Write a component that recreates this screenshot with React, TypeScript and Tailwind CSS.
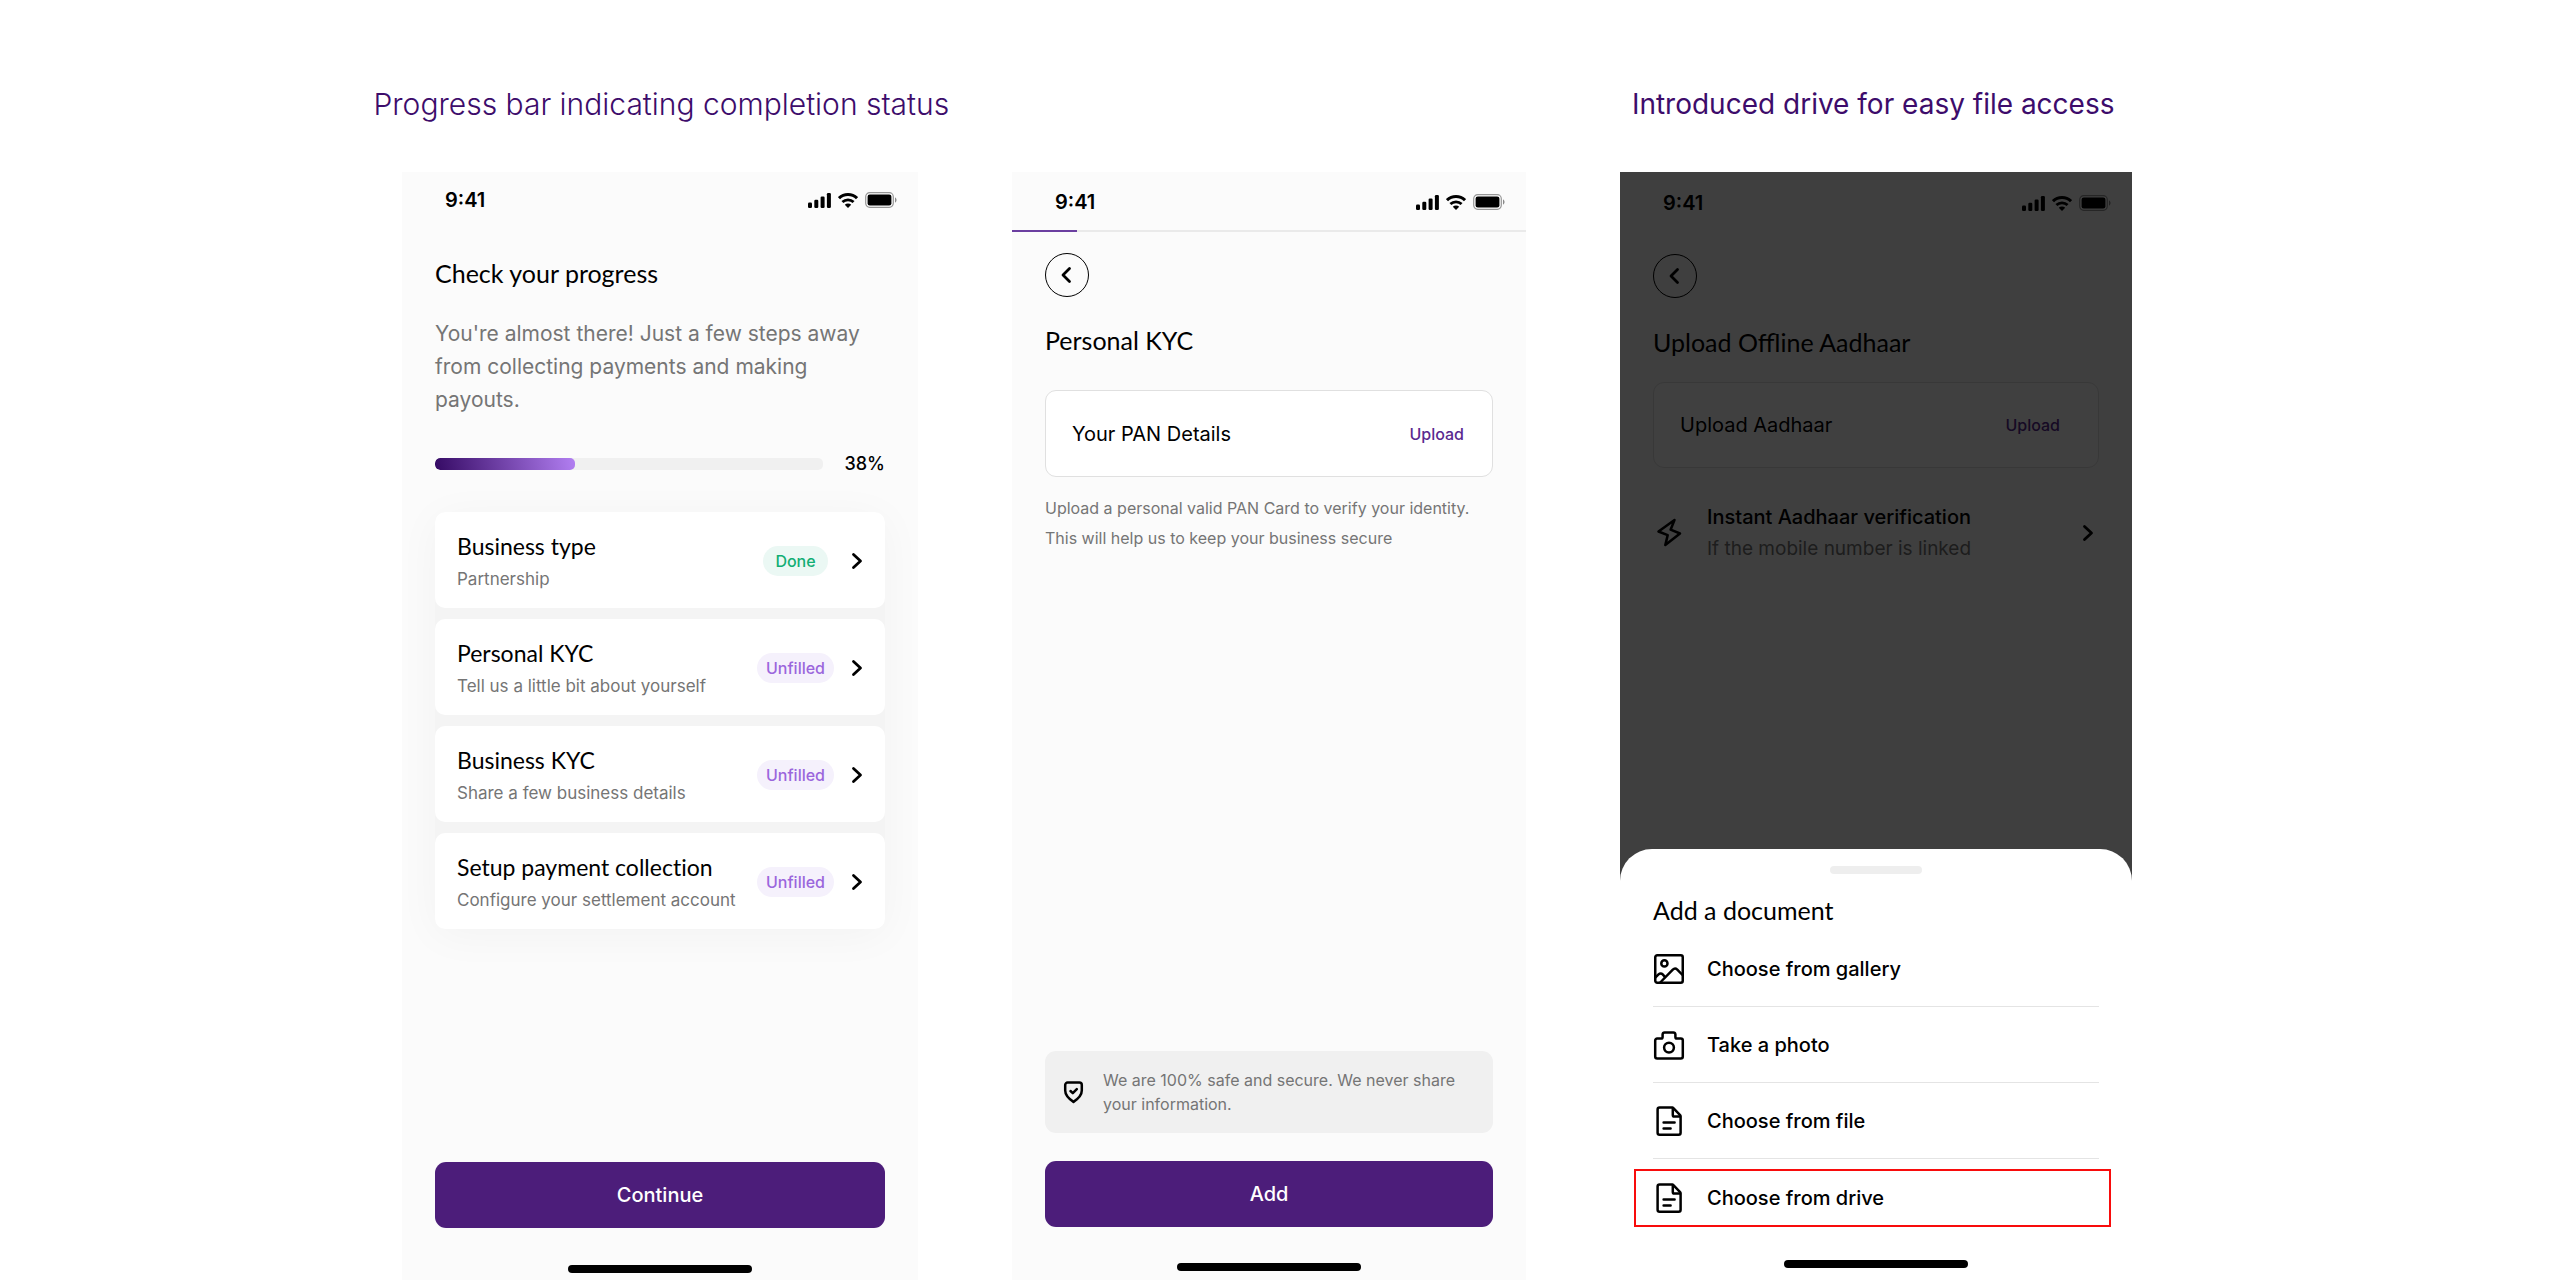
import type { ReactNode } from "react";
import clsx from "clsx";

const steps = [
  { title: "Business type", detail: "Partnership", done: true },
  {
    title: "Personal KYC",
    detail: "Tell us a little bit about yourself",
    done: false,
  },
  { title: "Business KYC", detail: "Share a few business details", done: false },
  {
    title: "Setup payment collection",
    detail: "Configure your settlement account",
    done: false,
  },
];

const titleClass = "font-['Lato',sans-serif] text-[25px] leading-8 text-black";

const ChevronRight = () => (
  <svg width="12" height="18" viewBox="0 0 12 18" fill="none">
    <path
      d="M2.5 2.5 9.5 9l-7 6.5"
      stroke="#000"
      strokeWidth="2.8"
      strokeLinecap="round"
      strokeLinejoin="round"
    />
  </svg>
);

const SignalIcon = () => (
  <svg width="23" height="15" viewBox="0 0 23 15">
    <rect x="0" y="9.5" width="4" height="5.5" rx="1.2" />
    <rect x="6.3" y="6.8" width="4" height="8.2" rx="1.2" />
    <rect x="12.6" y="3.6" width="4" height="11.4" rx="1.2" />
    <rect x="18.9" y="0" width="4" height="15" rx="1.2" />
  </svg>
);

const WifiIcon = () => (
  <svg width="20" height="15" viewBox="0 0 20 15" fill="none" stroke="#000">
    <path d="M1 5.2a13 13 0 0 1 18 0" strokeWidth="3" />
    <path d="M4.4 9a8.2 8.2 0 0 1 11.2 0" strokeWidth="2.8" />
    <path
      d="M10 15 6.8 11.8a4.6 4.6 0 0 1 6.4 0z"
      fill="#000"
      stroke="none"
    />
  </svg>
);

const BatteryIcon = () => (
  <svg width="32" height="16" viewBox="0 0 32 16">
    <rect
      x="0.7"
      y="0.7"
      width="27.6"
      height="14.6"
      rx="4"
      fill="none"
      stroke="#000"
      strokeOpacity="0.4"
      strokeWidth="1.2"
    />
    <rect x="2.6" y="2.6" width="23.8" height="10.8" rx="2.2" />
    <path d="M30 5.5c2 .6 2 4.4 0 5z" fillOpacity="0.45" />
  </svg>
);

const ShieldIcon = () => (
  <svg
    width="24"
    height="24"
    viewBox="0 0 24 24"
    fill="none"
    stroke="#000"
    strokeWidth="2.5"
    strokeLinecap="round"
    strokeLinejoin="round"
    className="shrink-0"
  >
    <path d="M5.6 2.6h11.8A2.4 2.4 0 0 1 19.8 5v5.6c0 5-3.8 8.4-8.3 11.3-4.5-2.9-8.3-6.3-8.3-11.3V5a2.4 2.4 0 0 1 2.4-2.4z" />
    <path d="m8.5 11 2.3 2.2 4-4" />
  </svg>
);

const Icon32 = ({ children }: { children: ReactNode }) => (
  <svg
    width="32"
    height="32"
    viewBox="0 0 32 32"
    fill="none"
    stroke="#000"
    strokeWidth="2.5"
    strokeLinecap="round"
    strokeLinejoin="round"
    className="shrink-0"
  >
    {children}
  </svg>
);

const BoltIcon = () => (
  <Icon32>
    <path d="M21.5 3 5.5 14.5l9.2 3.6-2.4 10L27 16.5l-9.4-3.8z" />
  </Icon32>
);

const GalleryIcon = () => (
  <Icon32>
    <rect x="2.25" y="2.25" width="27.5" height="27.5" rx="2" />
    <circle cx="11.4" cy="10.4" r="3.1" />
    <path d="m29.5 22-5.2-5.4c-1.6-1.5-3.2-1.3-4.5 0L7.2 29.5" />
    <path d="m2.5 24.4 3-3c1.4-1.3 3-1.3 4.2 0l2.2 2.4" />
  </Icon32>
);

const CameraIcon = () => (
  <Icon32>
    <path d="M9.6 6V5.4A2 2 0 0 1 11.6 3.6h8.8a2 2 0 0 1 2 1.8V8a1.6 1.6 0 0 0 1.6 1.6h3.8a2 2 0 0 1 2 2v16a2 2 0 0 1-2 2H4.2a2 2 0 0 1-2-2v-16a2 2 0 0 1 2-2H8A1.6 1.6 0 0 0 9.6 8z" />
    <circle cx="16" cy="18.6" r="4.9" />
  </Icon32>
);

const FileIcon = () => (
  <Icon32>
    <path d="M6.6 2.6H19a2 2 0 0 1 1.4.6l6.7 7a2 2 0 0 1 .5 1.4v16.2a2 2 0 0 1-2 2h-19a2 2 0 0 1-2-2V4.6a2 2 0 0 1 2-2z" />
    <path d="M19.8 3v7a1.6 1.6 0 0 0 1.6 1.6H27" />
    <path d="M10.6 17.4h11M10.6 23.4h7" />
  </Icon32>
);

const sources = [
  { label: "Choose from gallery", icon: <GalleryIcon /> },
  { label: "Take a photo", icon: <CameraIcon /> },
  { label: "Choose from file", icon: <FileIcon /> },
];

const StatusBar = ({ className }: { className: string }) => (
  <div
    className={clsx("flex items-center justify-between pr-[21px] pl-[43px]", className)}
  >
    <span className="text-xl font-semibold leading-6">9:41</span>
    <div className="flex items-center gap-[7px]">
      <SignalIcon />
      <WifiIcon />
      <BatteryIcon />
    </div>
  </div>
);

const BackButton = ({ className }: { className: string }) => (
  <button
    type="button"
    aria-label="Back"
    className={clsx(
      "flex size-11 cursor-pointer items-center justify-center rounded-full border border-black",
      className
    )}
  >
    <svg width="12" height="18" viewBox="0 0 12 18" fill="none">
      <path
        d="M8.5 2.5 2 9l6.5 6.5"
        stroke="#000"
        strokeWidth="2.8"
        strokeLinecap="round"
        strokeLinejoin="round"
      />
    </svg>
  </button>
);

const PrimaryButton = ({ children }: { children: ReactNode }) => (
  <button
    type="button"
    className="h-[66px] w-full cursor-pointer rounded-[11px] bg-[#4c1d7a] text-xl font-medium text-white"
  >
    {children}
  </button>
);

const HomeIndicator = () => (
  <div className="mx-auto h-2 w-[184px] rounded-full bg-black" />
);

const ProgressScreen = () => (
  <section className="flex flex-col bg-[#fbfbfb] pb-[7px]">
    <StatusBar className="h-14" />
    <div className="flex flex-1 flex-col px-[33px]">
      <h2 className={clsx("mt-[29px]", titleClass)}>Check your progress</h2>
      <p className="mt-7 pr-5 text-[21px] leading-[33px] text-[#757575]">
        You're almost there! Just a few steps away from collecting payments and
        making payouts.
      </p>
      <div className="mt-[34px] flex h-7 items-center gap-[22px]">
        <div
          role="progressbar"
          aria-label="Completion"
          aria-valuenow={38}
          className="h-3 flex-1 overflow-hidden rounded-[5px] bg-[#f0f0f0]"
        >
          <div className="h-full w-[36%] rounded-[5px] bg-linear-[77deg] from-[#350a64] to-[#b27ff2]" />
        </div>
        <span className="text-lg font-medium">38%</span>
      </div>
      <ul className="mt-[34px] flex flex-col gap-[11px] rounded-[10px] bg-[#f4f4f4] shadow-[0_6px_44px_rgba(0,0,0,0.04)]">
        {steps.map((s) => (
          <li key={s.title}>
            <button
              type="button"
              className="flex w-full cursor-pointer items-center rounded-[10px] bg-white pt-[18px] pr-[22px] pb-[17px] pl-[22px] text-left"
            >
              <span className="flex flex-1 flex-col gap-[5px]">
                <span className="font-['Lato',sans-serif] text-[23px] leading-8 text-black [font-variant-ligatures:none]">
                  {s.title}
                </span>
                <span className="text-[17px] leading-6 text-[#757575]">
                  {s.detail}
                </span>
              </span>
              <span className="flex w-[77px] justify-center">
                <span
                  className={clsx(
                    "rounded-full text-base leading-[30px] font-medium",
                    s.done
                      ? "bg-[#ebf8f4] px-3 text-[#12ae74]"
                      : "bg-[#f5f1fc] px-[9px] text-[#9b66dc]"
                  )}
                >
                  {s.done ? "Done" : "Unfilled"}
                </span>
              </span>
              <span className="ml-[17px]">
                <ChevronRight />
              </span>
            </button>
          </li>
        ))}
      </ul>
      <div className="mt-auto mb-[37px]">
        <PrimaryButton>Continue</PrimaryButton>
      </div>
    </div>
    <HomeIndicator />
  </section>
);

const PersonalKycScreen = () => (
  <section className="flex flex-col bg-[#fbfbfb] pb-[9px]">
    <StatusBar className="h-[58px] pt-0.5" />
    <div className="h-0.5 bg-[#eaeaea]">
      <div className="h-full w-[65px] bg-[#6b3fa0]" />
    </div>
    <div className="flex flex-1 flex-col px-[33px]">
      <BackButton className="mt-[21px]" />
      <h2 className={clsx("mt-[27px]", titleClass)}>Personal KYC</h2>
      <div className="mt-[34px] flex h-[87px] items-center justify-between rounded-[11px] border border-[#e0e0e0] bg-white pr-7 pl-[26px]">
        <span className="text-xl">Your PAN Details</span>
        <button
          type="button"
          className="cursor-pointer text-base font-medium text-[#5a2a90]"
        >
          Upload
        </button>
      </div>
      <p className="mt-4 text-base leading-[30px] text-[#757575]">
        Upload a personal valid PAN Card to verify your identity. This will help
        us to keep your business secure
      </p>
      <div className="mt-auto flex h-[82px] items-center gap-[17px] rounded-[11px] bg-[#f0f0f0] pr-6 pl-[17px]">
        <ShieldIcon />
        <p className="text-base leading-6 text-[#757575]">
          We are 100% safe and secure. We never share your information.
        </p>
      </div>
      <div className="mt-7 mb-[36px]">
        <PrimaryButton>Add</PrimaryButton>
      </div>
    </div>
    <HomeIndicator />
  </section>
);

const UploadScreen = () => (
  <section className="relative flex flex-col bg-[#fbfbfb]">
    <StatusBar className="h-[62px]" />
    <div className="px-[33px]">
      <BackButton className="mt-5" />
      <h2 className={clsx("mt-7", titleClass)}>Upload Offline Aadhaar</h2>
      <div className="mt-6 flex h-[86px] items-center justify-between rounded-[11px] border border-[#e0e0e0] bg-white pr-[38px] pl-[26px]">
        <span className="text-xl">Upload Aadhaar</span>
        <button
          type="button"
          className="cursor-pointer text-base font-medium text-[#5a2a90]"
        >
          Upload
        </button>
      </div>
      <button
        type="button"
        className="mt-[33px] flex w-full cursor-pointer items-center gap-[22px] pr-[5px] text-left"
      >
        <BoltIcon />
        <span className="flex-1">
          <span className="block text-xl leading-8 font-medium">
            Instant Aadhaar verification
          </span>
          <span className="block text-[19px] leading-8 text-[#757575]">
            If the mobile number is linked
          </span>
        </span>
        <ChevronRight />
      </button>
    </div>

    <div className="absolute inset-0 bg-black/75" />

    <div
      role="dialog"
      aria-labelledby="sheet-title"
      className="relative mt-auto rounded-t-[32px] bg-white px-[33px] pt-[17px] pb-[12px]"
    >
      <div className="mx-auto h-2 w-[92px] rounded-full bg-[#eeeeee]" />
      <h2 id="sheet-title" className={clsx("mt-5", titleClass)}>
        Add a document
      </h2>
      <div className="mt-[5px]">
        {sources.map((s) => (
          <button
            key={s.label}
            type="button"
            className="flex h-[76px] w-full cursor-pointer items-center gap-[22px] border-b border-[#e4e4e4] text-xl font-medium"
          >
            {s.icon}
            {s.label}
          </button>
        ))}
        <div className="-mr-3 -ml-[19px] pt-[10px]">
          <button
            type="button"
            className="flex h-[58px] w-full cursor-pointer items-center gap-[22px] border-2 border-[#f80c0c] pl-[17px] text-xl font-medium"
          >
            <FileIcon />
            Choose from drive
          </button>
        </div>
      </div>
      <div className="mt-[33px]">
        <HomeIndicator />
      </div>
    </div>
  </section>
);

export default function App() {
  return (
    <div className="flex min-h-screen flex-col bg-white font-['Inter',sans-serif] text-black">
      <header className="flex justify-center pt-[84px] pr-[72px] pb-12">
        <div className="flex w-full max-w-[1741px] items-center justify-between gap-8 leading-10 text-[#3d0c6b]">
          <h1 className="text-[30px] font-light">
            Progress bar indicating completion status
          </h1>
          <p className="text-[28px]">Introduced drive for easy file access</p>
        </div>
      </header>
      <main className="flex flex-1 justify-center pr-[26px]">
        <div className="grid w-full max-w-[1730px] grid-cols-[516fr_514fr_512fr] gap-[94px]">
          <ProgressScreen />
          <PersonalKycScreen />
          <UploadScreen />
        </div>
      </main>
    </div>
  );
}
